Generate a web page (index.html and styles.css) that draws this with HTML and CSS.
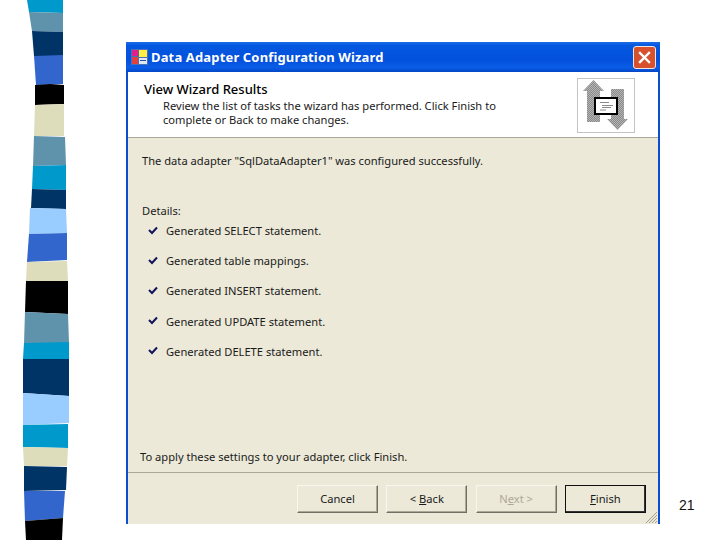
FILE: index.html
```html
<!DOCTYPE html>
<html lang="en">
<head>
<meta charset="utf-8">
<title>Data Adapter Configuration Wizard</title>
<link rel="stylesheet" href="styles.css">
</head>
<body>
<svg class="stripe" width="72" height="540" viewBox="0 0 72 540" aria-hidden="true">
  <polygon fill="#0099cc" points="27,0 63,0 63,13 29,12"/>
  <polygon fill="#5f93ac" points="29,12 63,13 63,32 32,31"/>
  <polygon fill="#003366" points="32,31 63,32 63,56 34,56"/>
  <polygon fill="#3366cc" points="34,56 63,55 63,84 36,85"/>
  <polygon fill="#000000" points="35,85 50,84 64,85 64,104 35,105"/>
  <polygon fill="#ddddbb" points="35,105 64,104 64,136 34,136"/>
  <polygon fill="#5f93ac" points="34,136 65,137 66,165 33,166"/>
  <polygon fill="#0099cc" points="33,166 66,165 66,190 32,189"/>
  <polygon fill="#003366" points="32,189 66,190 66,209 31,208"/>
  <polygon fill="#99ccff" points="30,208 66,209 67,233 29,234"/>
  <polygon fill="#3366cc" points="29,234 67,233 67,260 27,262"/>
  <polygon fill="#ddddbb" points="27,262 67,261 68,281 26,281"/>
  <polygon fill="#000000" points="26,281 68,281 68,314 25,312"/>
  <polygon fill="#5f93ac" points="25,312 68,314 69,343 24,343"/>
  <polygon fill="#0099cc" points="24,343 69,342 69,359 23,359"/>
  <polygon fill="#003366" points="23,359 69,359 69,396 23,393"/>
  <polygon fill="#99ccff" points="23,393 69,396 69,423 23,425"/>
  <polygon fill="#0099cc" points="23,425 68,424 68,448 23,447"/>
  <polygon fill="#ddddbb" points="23,447 68,448 67,466 24,466"/>
  <polygon fill="#003366" points="24,466 67,467 66,490 24,491"/>
  <polygon fill="#3366cc" points="24,491 65,491 63,518 25,521"/>
  <polygon fill="#000000" points="25,521 63,518 62,540 26,540"/>
</svg>

<main class="page">
  <section class="window">
    <header class="titlebar">
      <svg class="app-icon" width="17" height="16" viewBox="0 0 17 16" aria-hidden="true">
        <rect width="17" height="16" fill="#4a6fb5"/>
        <rect x="1" y="1" width="6" height="6" fill="#e0208a"/>
        <rect x="8" y="1" width="8" height="7" fill="#ffee44"/>
        <rect x="1" y="8" width="6" height="7" fill="#e04040"/>
        <rect x="8" y="9" width="8" height="6" fill="#dfe8f5"/>
        <rect x="9" y="11" width="6" height="1" fill="#2a50a0"/>
      </svg>
      <h1 class="title">Data Adapter Configuration Wizard</h1>
      <button class="close" type="button" aria-label="Close">
        <svg width="13" height="13" viewBox="0 0 13 13" aria-hidden="true">
          <path d="M2 2 L11 11 M11 2 L2 11" stroke="#ffffff" stroke-width="2.4" stroke-linecap="square"/>
        </svg>
      </button>
    </header>

    <div class="head">
      <div class="head-text">
        <h2 class="head-title">View Wizard Results</h2>
        <p class="head-desc">Review the list of tasks the wizard has performed. Click Finish to<br>complete or Back to make changes.</p>
      </div>
      <div class="head-icon">
        <svg width="56" height="53" viewBox="1 1 56 53" aria-hidden="true">
          <defs>
            <pattern id="dither" width="2" height="2" patternUnits="userSpaceOnUse">
              <rect width="2" height="2" fill="#b4b4b4"/>
              <rect width="1" height="1" fill="#8a8a8a"/>
              <rect x="1" y="1" width="1" height="1" fill="#8a8a8a"/>
            </pattern>
          </defs>
          <polygon fill="url(#dither)" points="16.5,2 27,13 23,13 23,44 10,44 10,13 6,13"/>
          <polygon fill="url(#dither)" points="34,11 47,11 47,41 51,41 40.5,52 30,41 34,41"/>
          <rect x="18" y="20" width="22" height="16" fill="#ffffff" stroke="#000000" stroke-width="2"/>
          <path d="M23 24.500H32 M25 27.500H36 M25 29.500H34 M23 32H29" stroke="#8a8a8a" stroke-width="1" fill="none"/>
        </svg>
      </div>
    </div>

    <div class="content">
      <p class="status">The data adapter "SqlDataAdapter1" was configured successfully.</p>
      <p class="details-label">Details:</p>
      <ul class="tasks">
        <li class="task"><svg class="check" width="10" height="9" viewBox="0 0 10 9" aria-hidden="true"><path d="M1 4 L4 7 L9 1.500" fill="none" stroke="#14145a" stroke-width="2"/></svg>Generated SELECT statement.</li>
        <li class="task"><svg class="check" width="10" height="9" viewBox="0 0 10 9" aria-hidden="true"><path d="M1 4 L4 7 L9 1.500" fill="none" stroke="#14145a" stroke-width="2"/></svg>Generated table mappings.</li>
        <li class="task"><svg class="check" width="10" height="9" viewBox="0 0 10 9" aria-hidden="true"><path d="M1 4 L4 7 L9 1.500" fill="none" stroke="#14145a" stroke-width="2"/></svg>Generated INSERT statement.</li>
        <li class="task"><svg class="check" width="10" height="9" viewBox="0 0 10 9" aria-hidden="true"><path d="M1 4 L4 7 L9 1.500" fill="none" stroke="#14145a" stroke-width="2"/></svg>Generated UPDATE statement.</li>
        <li class="task"><svg class="check" width="10" height="9" viewBox="0 0 10 9" aria-hidden="true"><path d="M1 4 L4 7 L9 1.500" fill="none" stroke="#14145a" stroke-width="2"/></svg>Generated DELETE statement.</li>
      </ul>
      <p class="apply">To apply these settings to your adapter, click Finish.</p>
    </div>

    <footer class="footer">
      <button class="btn" type="button">Cancel</button>
      <button class="btn" type="button">&lt; <u>B</u>ack</button>
      <button class="btn btn-disabled" type="button" disabled>N<u>e</u>xt &gt;</button>
      <button class="btn btn-default" type="button"><u>F</u>inish</button>
      <svg class="grip" width="14" height="14" viewBox="0 0 14 14" aria-hidden="true">
        <path d="M13 2 L2 13 M13 5 L5 13 M13 8 L8 13 M13 11 L11 13" stroke="#a5a292" stroke-width="1"/>
      </svg>
    </footer>
  </section>
  <div class="page-number">21</div>
</main>
</body>
</html>
```

FILE: styles.css
```css
* { box-sizing: border-box; }

html, body {
  margin: 0;
  padding: 0;
  background: #ffffff;
}

body {
  width: 720px;
  height: 540px;
  overflow: hidden;
  position: relative;
}

.stripe {
  position: absolute;
  left: 0;
  top: 0;
}

.page {
  display: flex;
  align-items: flex-end;
  height: 524px;
  padding-left: 126px;
}

.page-number {
  font: 14px/16px "Liberation Sans", Arial, sans-serif;
  color: #111111;
  margin: 0 0 11px 19px;
}

.window {
  width: 534px;
  height: 482px;
  display: flex;
  flex-direction: column;
  background: #ece9d8;
  border-left: 2px solid #0a4fd0;
  border-right: 2px solid #0a4fd0;
  font: 11.15px/14px "Noto Sans", Tahoma, sans-serif;
  color: #1a1a1a;
}

.titlebar {
  height: 30px;
  margin: 0 -2px;
  padding: 0 4px 0 5px;
  display: flex;
  align-items: center;
  background: linear-gradient(180deg, #1b6ce8 0%, #0458e0 12%, #0350dc 60%, #0a5ce6 85%, #0347c8 100%);
}

.app-icon { flex: none; }

.title {
  margin: 0 0 0 3px;
  flex: 1;
  font: bold 13px/16px "Noto Sans", Tahoma, sans-serif;
  letter-spacing: 0.15px;
  color: #ffffff;
}

.close {
  width: 23px;
  height: 23px;
  padding: 0;
  display: flex;
  align-items: center;
  justify-content: center;
  background: #d8512e;
  border: 1px solid #f2e6e0;
  border-radius: 3px;
}

.head {
  height: 66px;
  display: flex;
  justify-content: space-between;
  background: #ffffff;
  border-bottom: 1px solid #aca899;
}

.head-text { padding: 9px 0 0 16px; }

.head-title {
  margin: 0;
  font: 500 13px/16px "Noto Sans", Tahoma, sans-serif;
  color: #000000;
}

.head-desc {
  margin: 2px 0 0 19px;
}

.head-icon {
  width: 58px;
  height: 55px;
  margin: 6px 23px 0 0;
  border: 1px solid #c4c4c4;
}

.head-icon svg { display: block; }

.content {
  flex: 1;
  display: flex;
  flex-direction: column;
  padding: 16px 0 0 14px;
  border-bottom: 1px solid #aca899;
}

.content p { margin: 0; }

.details-label { margin-top: 36px !important; }

.tasks {
  list-style: none;
  margin: 6px 0 0;
  padding: 0 0 0 6px;
  display: flex;
  flex-direction: column;
  gap: 16.200px;
}

.task {
  display: flex;
  align-items: center;
}

.check {
  flex: none;
  margin: -2px 8px 0 0;
}

.apply {
  margin: auto 0 8px -2px !important;
}

.footer {
  height: 51px;
  position: relative;
  display: flex;
  align-items: flex-start;
  gap: 8.300px;
  padding: 12px 0 0 169px;
}

.btn {
  width: 81px;
  height: 28px;
  padding: 0;
  font: 11.15px/14px "Noto Sans", Tahoma, sans-serif;
  color: #1a1a1a;
  background: #ece9d8;
  border: 1px solid;
  border-color: #f8f6ee #716f64 #716f64 #f8f6ee;
  box-shadow: inset -1px -1px 0 #aca899;
}

.btn-disabled { color: #aca899; }

.btn-default {
  border: 1px solid #111111;
  box-shadow: inset -1px -1px 0 #333333;
}

.grip {
  position: absolute;
  right: 0;
  bottom: 0;
}
```
